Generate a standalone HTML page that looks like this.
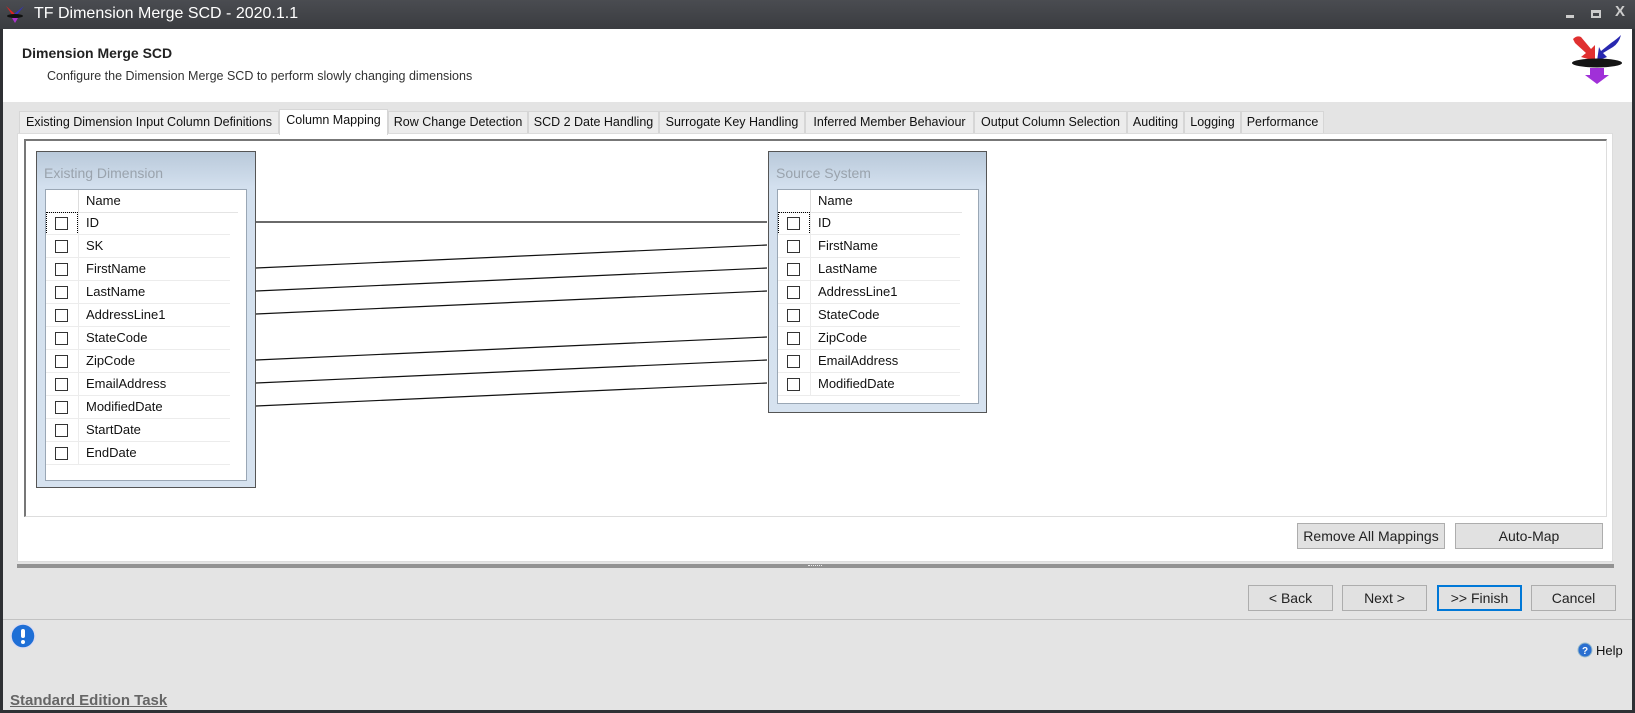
<!DOCTYPE html>
<html><head><meta charset="utf-8"><style>
*{box-sizing:border-box;margin:0;padding:0}
body{width:1635px;height:713px;overflow:hidden;background:#2e3034;font-family:"Liberation Sans",sans-serif;position:relative;font-size:13px;color:#111}
.a{position:absolute}
.tab{position:absolute;top:111px;height:23px;background:#ececec;border:1px solid #d6d6d6;border-bottom:none;font-size:12.5px;line-height:21px;text-align:center;color:#111;white-space:nowrap;overflow:hidden}
.btn{position:absolute;height:26px;background:#e1e1e1;border:1px solid #adadad;font-size:14px;line-height:24px;text-align:center;color:#222}
.box{position:absolute;border:1px solid #555;background:linear-gradient(#b9c9da,#d3e0ee 35px,#d6e2ef)}
.box .t{position:absolute;left:7px;top:13px;font-size:14px;color:#9aa3ad}
.grid{position:absolute;background:#fff;border:1px solid #9aa7b5}
.row{position:absolute;left:0;height:23px;border-bottom:1px solid #ececec;font-size:13px;line-height:22px}
.cb{position:absolute;left:9px;top:5px;width:13px;height:13px;border:1px solid #333;background:#fff}
.cell{position:absolute;left:32px;top:0;bottom:0;border-left:1px solid #ececec;padding-left:7px}
</style></head><body>
<div class="a" style="left:0;top:0;width:1635px;height:29px;background:linear-gradient(#4a4c51,#3a3c40)"></div>
<svg class="a" style="left:4px;top:4px" width="22" height="20" viewBox="0 0 22 20"><path d="M2 2 L9 12 L11 10 Z" fill="#d22"/><path d="M20 2 L12 12 L10 10 Z" fill="#33b"/><ellipse cx="11" cy="12" rx="8" ry="2" fill="#111"/><path d="M8 14 L14 14 L11 19 Z" fill="#a3c"/></svg>
<div class="a" style="left:34px;top:5px;color:#fff;font-size:16px">TF Dimension Merge SCD - 2020.1.1</div>
<div class="a" style="left:1566px;top:15px;width:8px;height:3px;background:#ccc"></div>
<div class="a" style="left:1591px;top:10px;width:10px;height:8px;border:2px solid #ccc;border-top-width:3px"></div>
<div class="a" style="left:1615px;top:3px;color:#ccc;font-size:15px;font-weight:bold">X</div>
<div class="a" style="left:3px;top:29px;width:1629px;height:681px;background:#e4e4e4"></div>
<div class="a" style="left:3px;top:29px;width:1629px;height:73px;background:#fff"></div>
<div class="a" style="left:22px;top:45px;font-size:14px;font-weight:bold;color:#222">Dimension Merge SCD</div>
<div class="a" style="left:47px;top:69px;font-size:12.5px;color:#333">Configure the Dimension Merge SCD to perform slowly changing dimensions</div>
<svg class="a" style="left:1571px;top:33px" width="52" height="52" viewBox="0 0 52 52">
<path d="M2 6 Q6 2 10 4 L20 16 L24 12 L24 28 L10 24 L15 20 L4 10 Z" fill="#e03030"/>
<path d="M50 2 Q48 10 42 14 L32 20 L36 24 L26 28 L28 14 L30 18 L40 10 Q46 6 50 2 Z" fill="#2828b0"/>
<ellipse cx="26" cy="30" rx="25" ry="4.5" fill="#151515"/>
<path d="M19 35 L33 35 L33 42 L38 42 L26 51 L14 42 L19 42 Z" fill="#a030d8"/></svg>
<div class="tab" style="left:19px;width:260px">Existing Dimension Input Column Definitions</div>
<div class="tab" style="left:279px;width:109px;top:109px;height:26px;background:#fff;z-index:2">Column Mapping</div>
<div class="tab" style="left:388px;width:140px">Row Change Detection</div>
<div class="tab" style="left:528px;width:131px">SCD 2 Date Handling</div>
<div class="tab" style="left:659px;width:146px">Surrogate Key Handling</div>
<div class="tab" style="left:805px;width:169px">Inferred Member Behaviour</div>
<div class="tab" style="left:974px;width:153px">Output Column Selection</div>
<div class="tab" style="left:1127px;width:57px">Auditing</div>
<div class="tab" style="left:1184px;width:57px">Logging</div>
<div class="tab" style="left:1241px;width:83px">Performance</div>
<div class="a" style="left:17px;top:133px;width:1596px;height:429px;background:#fff;border:1px solid #dcdcdc"></div>
<div class="a" style="left:24px;top:139px;width:1583px;height:378px;background:#fff;border-top:2px solid #777;border-left:2px solid #777;border-right:1px solid #ddd;border-bottom:1px solid #ddd"></div>
<svg class="a" style="left:0;top:0" width="1635" height="713">
<g stroke="#111" stroke-width="1.2">
<line x1="256" y1="222" x2="767" y2="222"/>
<line x1="256" y1="268" x2="767" y2="245"/>
<line x1="256" y1="291" x2="767" y2="268"/>
<line x1="256" y1="314" x2="767" y2="291"/>
<line x1="256" y1="360" x2="767" y2="337"/>
<line x1="256" y1="383" x2="767" y2="360"/>
<line x1="256" y1="406" x2="767" y2="383"/>
</g></svg>
<div class="box" style="left:36px;top:151px;width:220px;height:337px">
<div class="t">Existing Dimension</div>
<div class="grid" style="left:8px;top:37px;width:202px;height:292px">
<div class="row" style="top:0;width:192px;border-bottom:1px solid #e4e4e4"><div class="cell" style="border-left-color:#ddd">Name</div></div>
<div class="row" style="top:22px;outline:1px dotted #000;outline-offset:-1px;width:32px;border:none"></div>
<div class="row" style="top:22px;width:184px"><div class="cb"></div><div class="cell">ID</div></div>
<div class="row" style="top:45px;width:184px"><div class="cb"></div><div class="cell">SK</div></div>
<div class="row" style="top:68px;width:184px"><div class="cb"></div><div class="cell">FirstName</div></div>
<div class="row" style="top:91px;width:184px"><div class="cb"></div><div class="cell">LastName</div></div>
<div class="row" style="top:114px;width:184px"><div class="cb"></div><div class="cell">AddressLine1</div></div>
<div class="row" style="top:137px;width:184px"><div class="cb"></div><div class="cell">StateCode</div></div>
<div class="row" style="top:160px;width:184px"><div class="cb"></div><div class="cell">ZipCode</div></div>
<div class="row" style="top:183px;width:184px"><div class="cb"></div><div class="cell">EmailAddress</div></div>
<div class="row" style="top:206px;width:184px"><div class="cb"></div><div class="cell">ModifiedDate</div></div>
<div class="row" style="top:229px;width:184px"><div class="cb"></div><div class="cell">StartDate</div></div>
<div class="row" style="top:252px;width:184px"><div class="cb"></div><div class="cell">EndDate</div></div>
</div></div>
<div class="box" style="left:768px;top:151px;width:219px;height:262px">
<div class="t">Source System</div>
<div class="grid" style="left:8px;top:37px;width:202px;height:215px">
<div class="row" style="top:0;width:184px;border-bottom:1px solid #e4e4e4"><div class="cell" style="border-left-color:#ddd">Name</div></div>
<div class="row" style="top:22px;width:32px;outline:1px dotted #000;outline-offset:-1px;border:none"></div>
<div class="row" style="top:22px;width:182px"><div class="cb"></div><div class="cell">ID</div></div>
<div class="row" style="top:45px;width:182px"><div class="cb"></div><div class="cell">FirstName</div></div>
<div class="row" style="top:68px;width:182px"><div class="cb"></div><div class="cell">LastName</div></div>
<div class="row" style="top:91px;width:182px"><div class="cb"></div><div class="cell">AddressLine1</div></div>
<div class="row" style="top:114px;width:182px"><div class="cb"></div><div class="cell">StateCode</div></div>
<div class="row" style="top:137px;width:182px"><div class="cb"></div><div class="cell">ZipCode</div></div>
<div class="row" style="top:160px;width:182px"><div class="cb"></div><div class="cell">EmailAddress</div></div>
<div class="row" style="top:183px;width:182px"><div class="cb"></div><div class="cell">ModifiedDate</div></div>
</div></div>
<div class="btn" style="left:1297px;top:523px;width:148px">Remove All Mappings</div>
<div class="btn" style="left:1455px;top:523px;width:148px">Auto-Map</div>
<div class="a" style="left:17px;top:564px;width:1597px;height:4px;background:#929292"></div>
<div class="a" style="left:808px;top:565px;width:14px;height:2px;border-top:1px dotted #eee"></div>
<div class="btn" style="left:1248px;top:585px;width:85px">&lt; Back</div>
<div class="btn" style="left:1342px;top:585px;width:85px">Next &gt;</div>
<div class="btn" style="left:1437px;top:585px;width:85px;border:2px solid #0078d7;line-height:22px">&gt;&gt; Finish</div>
<div class="btn" style="left:1531px;top:585px;width:85px">Cancel</div>
<div class="a" style="left:3px;top:619px;width:1629px;height:1px;background:#c2c2c2"></div>
<svg class="a" style="left:10px;top:623px" width="26" height="26" viewBox="0 0 26 26"><circle cx="13" cy="13" r="12" fill="#1f6fd6" stroke="#dde" stroke-width="1.5"/><rect x="11" y="6" width="4" height="9" rx="2" fill="#fff"/><circle cx="13" cy="19" r="2" fill="#fff"/></svg>
<svg class="a" style="left:1577px;top:642px" width="16" height="16" viewBox="0 0 16 16"><circle cx="8" cy="8" r="7" fill="#2a6fd0" stroke="#9bc" stroke-width="1"/><text x="8" y="12" font-size="10" font-weight="bold" fill="#fff" text-anchor="middle" font-family="Liberation Sans">?</text></svg>
<div class="a" style="left:1596px;top:643px;font-size:13px;color:#111">Help</div>
<div class="a" style="left:10px;top:692px;font-size:15px;font-weight:bold;color:#666;text-decoration:underline">Standard Edition Task</div>
</body></html>
